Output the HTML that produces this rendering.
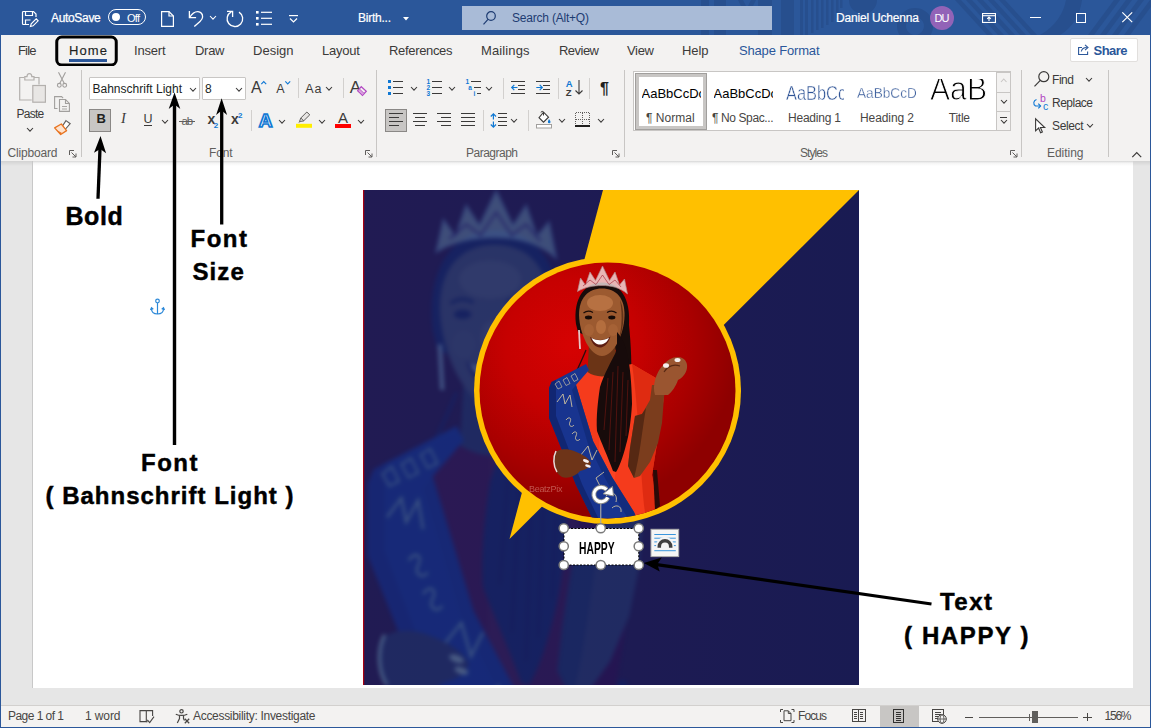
<!DOCTYPE html>
<html lang="en">
<head>
<meta charset="utf-8">
<title>Word</title>
<style>
html,body{margin:0;padding:0}
body{width:1151px;height:728px;overflow:hidden;position:relative;background:#e6e6e6;font-family:"Liberation Sans",sans-serif;color:#323130}
.a,.t,svg{position:absolute}
svg{overflow:visible}
.t{white-space:pre;line-height:1;font-size:13px}
#titlebar{position:absolute;left:0;top:0;width:1151px;height:35px;background:#2b579a;overflow:hidden}
#tabs{position:absolute;left:1px;top:35px;width:1149px;height:31px;background:#f3f2f1}
#ribbon{position:absolute;left:1px;top:66px;width:1149px;height:95px;background:#f3f2f1}
#shadow{position:absolute;left:1px;top:161px;width:1149px;height:5px;background:linear-gradient(#d2d2d2,#e6e6e6)}
#page{position:absolute;left:32px;top:161px;width:1101px;height:527px;background:linear-gradient(#d6d6d6,#f4f4f4 2px,#fff 5px);border-left:1px solid #c8c8c8;box-sizing:border-box}
#status{position:absolute;left:1px;top:705px;width:1149px;height:23px;background:#f3f2f1;border-top:1px solid #d2d0ce;box-sizing:border-box}
#lb{position:absolute;left:0;top:35px;width:1px;height:693px;background:#2b579a}
#rb{position:absolute;left:1150px;top:35px;width:1px;height:693px;background:#2b579a}
#bb{position:absolute;left:0;top:727px;width:1151px;height:1px;background:#2b579a}
.sep{position:absolute;width:1px;background:#c8c6c4}
.chev{position:absolute;width:6px;height:4px}
</style>
</head>
<body>
<div id="titlebar"><svg style="left:0;top:0" width="1151" height="35" viewBox="0 0 1151 35" fill="#274f8e"><rect x="701" y="0" width="8" height="35"/><rect x="714" y="0" width="12" height="35"/><path d="M738 0h5l4 8 4-8h5l-7 14h-4z"/><rect x="758" y="0" width="14" height="35"/><rect x="781" y="0" width="13" height="35"/><rect x="800" y="0" width="3" height="35"/><rect x="805" y="0" width="3" height="35"/><rect x="811" y="0" width="2.500" height="33"/><rect x="816" y="0" width="2.500" height="30"/><rect x="821" y="0" width="2.500" height="28"/><rect x="826" y="0" width="2.500" height="25"/><rect x="831" y="0" width="2.500" height="22"/><rect x="836" y="0" width="2.500" height="18"/><rect x="840" y="0" width="2.500" height="8"/><path d="M849 0a14 14 0 0 0 28 0z"/><path d="M915 8a18 18 0 1 0 .01 0zM915 17a9 9 0 1 1-.01 0z" fill-rule="evenodd"/><path d="M955 0h6l32 35h-6z"/><path d="M966 0h6l32 35h-6z"/><path d="M977 0h6l32 35h-6z"/><path d="M988 0h6l32 35h-6z"/><path d="M999 0h6l32 35h-6z"/><path d="M1040 35C1056 26 1064 12 1066 0h16c-2 16-10 28-22 35z"/><path d="M1088 35h6l26-35h-6z"/><path d="M1100 35h6l26-35h-6z"/><path d="M1112 35h6l26-35h-6z"/><path d="M1124 35h6l26-35h-6z"/></svg><svg style="left:22px;top:10.5px" width="16" height="16" viewBox="0 0 16 16" fill="none" stroke="#fff" stroke-width="1.2"><path d="M7 13.5H1.5a1 1 0 0 1-1-1V1.5a1 1 0 0 1 1-1h10l2.5 2.5V6"/><path d="M3.5 .5v4h7v-4"/><path d="M3.5 13.5V9h5"/><path d="M8.5 15.5l.7-2.6 5-5 1.9 1.9-5 5z"/></svg><span class="t" style='left:51.00px;top:12.00px;font-size:12px;color:#ffffff;letter-spacing:-0.328px;-webkit-text-stroke:.25px #fff;'>AutoSave</span><div class="a" style="left:108px;top:9px;width:36px;height:14px;border:1px solid #fff;border-radius:8px"></div><div class="a" style="left:112px;top:13px;width:8px;height:8px;border-radius:4px;background:#fff"></div><span class="t" style='left:127.00px;top:13.00px;font-size:11px;color:#ffffff;letter-spacing:-0.742px;'>Off</span><svg style="left:160.5px;top:10.5px" width="13" height="16" viewBox="0 0 13 16" fill="none" stroke="#fff" stroke-width="1.2"><path d="M.6 .6h7.4l4.4 4.4v10.4H.6z"/><path d="M8 .6v4.4h4.4"/></svg><svg style="left:0;top:0" width="300" height="35" viewBox="0 0 300 35" fill="none" stroke="#fff" stroke-width="1.300"><path d="M189.400 11v6.700h6.700"/><path d="M189.600 17.500C192 13.500 195 11.500 197.900 11.600c3 .100 4.800 2.500 4.700 5.300-.100 2-1.300 3.300-2.600 4.500L194.300 26.600"/><path d="M227 11.400h5.600v5.500"/><path d="M239 12.100A7.800 7.800 0 1 1 231.300 11.800"/></svg><svg style="left:209.5px;top:16px" width="6" height="3.2" viewBox="0 0 6 3.2"><path d="M0 0 L3.0 3.2 L6 0" fill="none" stroke="#fff" stroke-width="1.05"/></svg><svg style="left:255.5px;top:11px" width="16" height="15" viewBox="0 0 16 15" fill="#fff"><rect x="0" y="0" width="2.6" height="2.6"/><rect x="0" y="6" width="2.6" height="2.6"/><rect x="0" y="12" width="2.6" height="2.600"/><rect x="5" y=".7" width="11" height="1.2"/><rect x="5" y="6.7" width="11" height="1.2"/><rect x="5" y="12.7" width="11" height="1.200"/></svg><svg style="left:289px;top:14.5px" width="9" height="8" viewBox="0 0 9 8" fill="none" stroke="#fff" stroke-width="1.2"><path d="M0 .6h9"/><path d="M1 3.500l3.500 3.500 3.500-3.500"/></svg><span class="t" style='left:358.00px;top:12.00px;font-size:12px;color:#ffffff;letter-spacing:-0.241px;-webkit-text-stroke:.2px #fff;'>Birth...</span><svg style="left:402.500px;top:16.5px" width="6" height="4" viewBox="0 0 6 4"><path d="M0 0h6l-3 3.500z" fill="#fff"/></svg><div class="a" style="left:462px;top:6px;width:310px;height:23.5px;background:#a9bbd7"></div><svg style="left:482.500px;top:11px" width="13" height="14" viewBox="0 0 13 14" fill="none" stroke="#1e3c72" stroke-width="1.2"><circle cx="8" cy="5" r="4.300"/><path d="M5 8.300L.5 13.300"/></svg><span class="t" style='left:512.00px;top:12.00px;font-size:12px;color:#1e3c72;letter-spacing:-0.208px;'>Search (Alt+Q)</span><span class="t" style='left:836.00px;top:12.00px;font-size:12px;color:#ffffff;letter-spacing:-0.184px;-webkit-text-stroke:.2px #fff;'>Daniel Uchenna</span><div class="a" style="left:930px;top:6.2px;width:23.6px;height:23.6px;border-radius:12px;background:#9263b7"></div><span class="t" style='left:934.50px;top:13.00px;font-size:11px;color:#ffffff;letter-spacing:-0.891px;'>DU</span><svg style="left:981.5px;top:13px" width="14" height="10" viewBox="0 0 14 10" fill="none" stroke="#fff" stroke-width="1.1"><rect x=".55" y=".55" width="12.9" height="8.9"/><path d="M.5 2.700h13"/><path d="M7 8V4.300M5.200 5.800L7 4l1.800 1.800"/></svg><div class="a" style="left:1030px;top:16.5px;width:10.500px;height:1.200px;background:#fff"></div><div class="a" style="left:1076px;top:12.5px;width:8px;height:8px;border:1.200px solid #fff"></div><svg style="left:1121.700px;top:12px" width="10.500" height="10.500" viewBox="0 0 10.500 10.500" stroke="#fff" stroke-width="1.200"><path d="M.3 .3l9.900 9.900M10.200 .3L.3 10.200"/></svg></div><div id="tabs"></div><span class="t" style='left:18.00px;top:44.00px;font-size:13px;color:#3b3a39;letter-spacing:-0.818px;'>File</span><svg style="left:0;top:30px" width="130" height="40" viewBox="0 30 130 40"><rect x="56.750" y="37" width="59.500" height="28" rx="5" fill="none" stroke="#000" stroke-width="3"/></svg><span class="t" style='left:69.00px;top:44.00px;font-size:13px;color:#201f1e;letter-spacing:1.104px;-webkit-text-stroke:0.15px #201f1e;'>Home</span><div class="a" style="left:69px;top:59px;width:38px;height:3px;background:#2b579a"></div><span class="t" style='left:134.00px;top:44.00px;font-size:13px;color:#3b3a39;letter-spacing:-0.203px;'>Insert</span><span class="t" style='left:195.00px;top:44.00px;font-size:13px;color:#3b3a39;letter-spacing:-0.281px;'>Draw</span><span class="t" style='left:253.00px;top:44.00px;font-size:13px;color:#3b3a39;letter-spacing:0.006px;'>Design</span><span class="t" style='left:322.00px;top:44.00px;font-size:13px;color:#3b3a39;letter-spacing:-0.209px;'>Layout</span><span class="t" style='left:389.00px;top:44.00px;font-size:13px;color:#3b3a39;letter-spacing:-0.332px;'>References</span><span class="t" style='left:481.00px;top:44.00px;font-size:13px;color:#3b3a39;letter-spacing:0.116px;'>Mailings</span><span class="t" style='left:559.00px;top:44.00px;font-size:13px;color:#3b3a39;letter-spacing:-0.525px;'>Review</span><span class="t" style='left:627.00px;top:44.00px;font-size:13px;color:#3b3a39;letter-spacing:-0.318px;'>View</span><span class="t" style='left:682.00px;top:44.00px;font-size:13px;color:#3b3a39;letter-spacing:-0.083px;'>Help</span><span class="t" style='left:739.00px;top:44.00px;font-size:13px;color:#2b579a;letter-spacing:-0.170px;'>Shape Format</span><div class="a" style="left:1070px;top:38px;width:66px;height:22px;border:1px solid #e1dfdd;background:#fff;border-radius:2px"></div><svg style="left:1077.500px;top:44px" width="12" height="11" viewBox="0 0 12 11" fill="none" stroke="#2b579a" stroke-width="1.1"><path d="M4 3.500H.6v7h9V7.500"/><path d="M3.300 7.500c.5-2.500 2.500-4 5.500-4"/><path d="M7 .8l3 2.700-3 2.700"/></svg><span class="t" style='left:1093.50px;top:44.00px;font-size:13px;color:#2b579a;font-weight:700;letter-spacing:-0.535px;'>Share</span><div id="ribbon"></div><div class="sep" style="left:80.5px;top:69.5px;height:87.0px;background:#c8c6c4"></div><div class="sep" style="left:376px;top:69.5px;height:87.0px;background:#c8c6c4"></div><div class="sep" style="left:623.5px;top:69.5px;height:87.0px;background:#c8c6c4"></div><div class="sep" style="left:1021px;top:69.5px;height:87.0px;background:#c8c6c4"></div><div class="sep" style="left:1108px;top:69.5px;height:87.0px;background:#c8c6c4"></div><svg style="left:0;top:66px" width="80" height="45" viewBox="0 66 80 45" fill="none" stroke="#b3b0ad" stroke-width="1.200"><path d="M24.500 77.500H19.700v22.500h12"/><path d="M34 77.500h5v7"/><path d="M24.800 80v-3.300h2.200c0-1.700 1-3 2.400-3s2.400 1.300 2.400 3h2.200V80z" fill="#f3f2f1"/><rect x="32.800" y="85.500" width="12.600" height="16.700" fill="#e8e6e4"/></svg><span class="t" style='left:16.50px;top:108.00px;font-size:12px;color:#3b3a39;letter-spacing:-0.747px;'>Paste</span><svg style="left:26.8px;top:127.5px" width="6" height="3.2" viewBox="0 0 6 3.2"><path d="M0 0 L3.0 3.2 L6 0" fill="none" stroke="#3b3a39" stroke-width="1.05"/></svg><svg style="left:57px;top:72px" width="10" height="16" viewBox="0 0 10 16" fill="none" stroke="#a19f9d" stroke-width="1.100"><path d="M1.500 .3L7.300 11.500M8.500 .3L2.700 11.500"/><circle cx="2.300" cy="13.300" r="1.900"/><circle cx="7.700" cy="13.300" r="1.900"/></svg><svg style="left:54px;top:95.500px" width="16" height="16" viewBox="0 0 16 16" fill="none" stroke="#a19f9d" stroke-width="1.100"><path d="M3.500 12.500H.6V.6h7l1.500 1.500"/><path d="M5.500 3.500h6l3.900 3.900v8H5.500z" fill="#f3f2f1"/><path d="M11.500 3.500v4h4"/><path d="M8 10.500h5M8 13h5" stroke-width=".9"/></svg><svg style="left:0;top:110px" width="80" height="30" viewBox="0 110 80 30"><path d="M66 120.600L70.200 123.700 65.300 129.300 62 126.700z" fill="#fff" stroke="#605e5c" stroke-width="1.100"/><path d="M54.600 127.900L61.300 124 66.600 130.600 60.700 134.500z" fill="#fde3cf" stroke="#e8731f" stroke-width="1.300" stroke-linejoin="round"/><path d="M57.500 130.500l4.500 2.600-1.600 1.200z" fill="#e8731f"/></svg><span class="t" style='left:7.50px;top:147.00px;font-size:12px;color:#605e5c;letter-spacing:-0.172px;'>Clipboard</span><svg style="left:69px;top:149.5px" width="8" height="8" viewBox="0 0 8 8" fill="none" stroke="#605e5c" stroke-width="1"><path d="M.5 5V.5H5"/><path d="M2.500 2.500L7 7M7 3.500V7H3.500"/></svg><div class="a" style="left:89px;top:77px;width:109px;height:21px;border:1px solid #c8c6c4;background:#fff;border-radius:1px"></div><span class="t" style='left:92.50px;top:83.00px;font-size:12px;color:#201f1e;letter-spacing:0.007px;'>Bahnschrift Light</span><svg style="left:190.3px;top:87.5px" width="6" height="3.2" viewBox="0 0 6 3.2"><path d="M0 0 L3.0 3.2 L6 0" fill="none" stroke="#3b3a39" stroke-width="1.05"/></svg><div class="a" style="left:202px;top:77px;width:41.500px;height:21px;border:1px solid #c8c6c4;background:#fff;border-radius:1px"></div><span class="t" style='left:205.00px;top:83.00px;font-size:12px;color:#201f1e;'>8</span><svg style="left:235.5px;top:87.5px" width="6" height="3.2" viewBox="0 0 6 3.2"><path d="M0 0 L3.0 3.2 L6 0" fill="none" stroke="#3b3a39" stroke-width="1.05"/></svg><span class="t" style='left:251.00px;top:80.00px;font-size:16px;color:#3b3a39;'>A</span><svg style="left:261px;top:81.300px" width="5.500" height="3.500" viewBox="0 0 5.500 3.500"><path d="M.3 3.200L2.750 .6 5.200 3.200" fill="none" stroke="#0f78d4" stroke-width="1.100"/></svg><span class="t" style='left:276.30px;top:83.00px;font-size:12.5px;color:#3b3a39;'>A</span><svg style="left:284.700px;top:81px" width="5.500" height="3.500" viewBox="0 0 5.500 3.500"><path d="M.3 .3L2.750 2.900 5.200 .3" fill="none" stroke="#0f78d4" stroke-width="1.100"/></svg><div class="sep" style="left:297.5px;top:78px;height:20px;background:#d2d0ce"></div><span class="t" style='left:305.30px;top:83.00px;font-size:12.5px;color:#3b3a39;letter-spacing:0.903px;'>Aa</span><svg style="left:325.7px;top:87.3px" width="6" height="3.2" viewBox="0 0 6 3.2"><path d="M0 0 L3.0 3.2 L6 0" fill="none" stroke="#3b3a39" stroke-width="1.05"/></svg><div class="sep" style="left:342.5px;top:78px;height:20px;background:#d2d0ce"></div><span class="t" style='left:349.70px;top:79.00px;font-size:17px;color:#3b3a39;'>A</span><svg style="left:357px;top:86px" width="10" height="10" viewBox="0 0 10 10"><path d="M4.300 .700L9.300 5.200 5.500 9.300 .7 4.800z" fill="#f3f2f1" stroke="#b146c2" stroke-width="1.200"/><path d="M2.500 3L7.300 7.500 5.500 9.300 .7 4.800z" fill="#d9a0e0" stroke="#b146c2" stroke-width=".800"/></svg><div class="a" style="left:89px;top:109px;width:20px;height:21px;border:1px solid #8a8886;background:#c8c6c4"></div><span class="t" style='left:96.50px;top:112.00px;font-size:13px;color:#201f1e;font-weight:700;'>B</span><span class="t" style='left:121.00px;top:111.00px;font-size:14.5px;color:#3b3a39;font-style:italic;font-family:"Liberation Serif",serif;'>I</span><span class="t" style='left:143.50px;top:113.00px;font-size:12.5px;color:#3b3a39;'>U</span><div class="a" style="left:143.500px;top:125px;width:8px;height:1px;background:#3b3a39"></div><svg style="left:162.3px;top:119.5px" width="6" height="3.2" viewBox="0 0 6 3.2"><path d="M0 0 L3.0 3.2 L6 0" fill="none" stroke="#3b3a39" stroke-width="1.05"/></svg><span class="t" style='left:181.50px;top:116.00px;font-size:11.5px;color:#605e5c;letter-spacing:-1.097px;'>ab</span><div class="a" style="left:179.300px;top:120.500px;width:15.500px;height:1px;background:#605e5c"></div><span class="t" style='left:207.50px;top:112.00px;font-size:14px;color:#3b3a39;font-weight:700;'>x</span><span class="t" style='left:213.70px;top:122.00px;font-size:8px;color:#0f78d4;font-weight:700;'>2</span><span class="t" style='left:231.00px;top:112.00px;font-size:14px;color:#3b3a39;font-weight:700;'>x</span><span class="t" style='left:238.00px;top:112.00px;font-size:8px;color:#0f78d4;font-weight:700;'>2</span><div class="sep" style="left:250.5px;top:110px;height:21px;background:#d2d0ce"></div><span class="t" style='left:258.70px;top:111.00px;font-size:19px;color:#fff;font-weight:700;-webkit-text-stroke:1.700px #0f78d4;'>A</span><svg style="left:278.5px;top:119.5px" width="6" height="3.2" viewBox="0 0 6 3.2"><path d="M0 0 L3.0 3.2 L6 0" fill="none" stroke="#3b3a39" stroke-width="1.05"/></svg><svg style="left:296px;top:111.200px" width="16" height="17" viewBox="0 0 16 17"><rect x="0" y="12.800" width="16" height="4" fill="#ffee00"/><path d="M3.500 10.500l1.300-3.500 6-6 3 2.800-6.300 6.200z" fill="#e6e4e2" stroke="#605e5c" stroke-width="1"/><path d="M4.800 7l3 3" stroke="#605e5c" stroke-width="1"/><path d="M2 11.500l1.500-1 .8.800z" fill="#605e5c"/></svg><svg style="left:319px;top:119.5px" width="6" height="3.2" viewBox="0 0 6 3.2"><path d="M0 0 L3.0 3.2 L6 0" fill="none" stroke="#3b3a39" stroke-width="1.05"/></svg><span class="t" style='left:338.00px;top:110.00px;font-size:15px;color:#3b3a39;'>A</span><div class="a" style="left:335px;top:124px;width:16px;height:4px;background:#ff0000"></div><svg style="left:357.5px;top:119.5px" width="6" height="3.2" viewBox="0 0 6 3.2"><path d="M0 0 L3.0 3.2 L6 0" fill="none" stroke="#3b3a39" stroke-width="1.05"/></svg><span class="t" style='left:209.00px;top:147.00px;font-size:12px;color:#605e5c;letter-spacing:-0.172px;'>Font</span><svg style="left:365px;top:149.5px" width="8" height="8" viewBox="0 0 8 8" fill="none" stroke="#605e5c" stroke-width="1"><path d="M.5 5V.5H5"/><path d="M2.500 2.500L7 7M7 3.500V7H3.500"/></svg><svg style="left:410.5px;top:87px" width="6" height="3.2" viewBox="0 0 6 3.2"><path d="M0 0 L3.0 3.2 L6 0" fill="none" stroke="#3b3a39" stroke-width="1.05"/></svg><span class="t" style='left:426.50px;top:79.00px;font-size:6.5px;color:#0f78d4;font-weight:700;'>1</span><span class="t" style='left:426.50px;top:85.00px;font-size:6.5px;color:#0f78d4;font-weight:700;'>2</span><span class="t" style='left:426.50px;top:91.00px;font-size:6.5px;color:#0f78d4;font-weight:700;'>3</span><svg style="left:449.3px;top:87px" width="6" height="3.2" viewBox="0 0 6 3.2"><path d="M0 0 L3.0 3.2 L6 0" fill="none" stroke="#3b3a39" stroke-width="1.05"/></svg><span class="t" style='left:465.50px;top:79.00px;font-size:6.5px;color:#0f78d4;font-weight:700;'>1</span><span class="t" style='left:468.30px;top:85.00px;font-size:6.5px;color:#0f78d4;font-weight:700;'>a</span><span class="t" style='left:473.50px;top:91.00px;font-size:6.5px;color:#0f78d4;font-weight:700;'>i</span><svg style="left:486.3px;top:87px" width="6" height="3.2" viewBox="0 0 6 3.2"><path d="M0 0 L3.0 3.2 L6 0" fill="none" stroke="#3b3a39" stroke-width="1.05"/></svg><div class="sep" style="left:503px;top:78px;height:21px;background:#d2d0ce"></div><svg style="left:511px;top:83px" width="7" height="9" viewBox="0 0 7 9"><path d="M6.500 4.500H1M3.300 1.800L.7 4.500l2.600 2.700" fill="none" stroke="#0f78d4" stroke-width="1.200"/></svg><svg style="left:535.500px;top:83px" width="7" height="9" viewBox="0 0 7 9"><path d="M.3 4.500H6M3.700 1.800L6.300 4.500 3.700 7.200" fill="none" stroke="#0f78d4" stroke-width="1.200"/></svg><div class="sep" style="left:558px;top:78px;height:21px;background:#d2d0ce"></div><span class="t" style='left:565.80px;top:79.00px;font-size:9.5px;color:#0f78d4;font-weight:700;'>A</span><span class="t" style='left:565.80px;top:88.00px;font-size:9.5px;color:#3b3a39;font-weight:700;'>Z</span><svg style="left:574.500px;top:80px" width="8" height="15" viewBox="0 0 8 15" fill="none" stroke="#3b3a39" stroke-width="1.100"><path d="M4 0v14M.5 10.500L4 14l3.500-3.500"/></svg><div class="sep" style="left:589px;top:78px;height:21px;background:#d2d0ce"></div><span class="t" style='left:600.00px;top:81.00px;font-size:16px;color:#201f1e;font-weight:700;'>¶</span><div class="a" style="left:385px;top:109px;width:20px;height:21px;border:1px solid #8a8886;background:#c8c6c4"></div><div class="sep" style="left:483px;top:110px;height:21px;background:#d2d0ce"></div><svg style="left:490px;top:112.500px" width="7" height="15" viewBox="0 0 7 15"><path d="M3.400 .8v5.700M3.400 8.500v5.700M.8 3.500L3.400 .8 6 3.500M.8 11.500L3.400 14.200 6 11.500" fill="none" stroke="#0f78d4" stroke-width="1.200"/></svg><svg style="left:511.3px;top:119px" width="6" height="3.2" viewBox="0 0 6 3.2"><path d="M0 0 L3.0 3.2 L6 0" fill="none" stroke="#3b3a39" stroke-width="1.05"/></svg><div class="sep" style="left:528px;top:110px;height:21px;background:#d2d0ce"></div><svg style="left:536px;top:111px" width="16" height="18" viewBox="0 0 16 18"><rect x=".5" y="13.500" width="15" height="3.500" fill="#fff" stroke="#a19f9d" stroke-width="1"/><path d="M7.500 1.200l5 5-5 5-4.500-4.500z" fill="#fff" stroke="#3b3a39" stroke-width="1.100"/><path d="M5 1.500c0-1.500 2.500-1.500 2.500 0v3" fill="none" stroke="#3b3a39" stroke-width="1"/><path d="M13 8c1 1.500 1.500 2.300 1.500 3a1.300 1.300 0 0 1-2.600 0c0-.7.400-1.500 1.100-3z" fill="#0f78d4"/></svg><svg style="left:558.5px;top:119px" width="6" height="3.2" viewBox="0 0 6 3.2"><path d="M0 0 L3.0 3.2 L6 0" fill="none" stroke="#3b3a39" stroke-width="1.05"/></svg><svg style="left:575px;top:112px" width="15" height="15" viewBox="0 0 15 15" fill="none" shape-rendering="crispEdges"><path d="M.5 .5h14v13.500" stroke="#605e5c" stroke-width="1" stroke-dasharray="1 1"/><path d="M.5 .5v13.500" stroke="#605e5c" stroke-width="1" stroke-dasharray="1 1"/><path d="M7.500 1v13M1 7.500h13" stroke="#605e5c" stroke-width="1" stroke-dasharray="1 1"/><path d="M0 14h15" stroke="#201f1e" stroke-width="2"/></svg><svg style="left:598px;top:119px" width="6" height="3.2" viewBox="0 0 6 3.2"><path d="M0 0 L3.0 3.2 L6 0" fill="none" stroke="#3b3a39" stroke-width="1.05"/></svg><span class="t" style='left:466.00px;top:147.00px;font-size:12px;color:#605e5c;letter-spacing:-0.506px;'>Paragraph</span><svg style="left:612px;top:149.5px" width="8" height="8" viewBox="0 0 8 8" fill="none" stroke="#605e5c" stroke-width="1"><path d="M.5 5V.5H5"/><path d="M2.500 2.500L7 7M7 3.500V7H3.500"/></svg><div class="a" style="left:633px;top:71px;width:375.500px;height:58px;border:1px solid #c8c6c4;background:#fff;overflow:hidden;box-sizing:content-box"></div><div class="a" style="left:635.500px;top:73.500px;width:64px;height:49.500px;border:3px solid #c8c6c4;outline:1px solid #a19f9d;background:#fff"></div><div class="a" style="left:641.500px;top:80px;width:59px;height:24px;overflow:hidden"><span class="t" style='left:0.00px;top:7.00px;font-size:13px;color:#000;'>AaBbCcDc</span></div><span class="t" style='left:646.00px;top:112.00px;font-size:12px;color:#484644;letter-spacing:0.042px;'>¶ Normal</span><div class="a" style="left:713.500px;top:80px;width:59px;height:24px;overflow:hidden"><span class="t" style='left:0.00px;top:7.00px;font-size:13px;color:#000;'>AaBbCcDc</span></div><span class="t" style='left:712.00px;top:112.00px;font-size:12px;color:#484644;letter-spacing:-0.392px;'>¶ No Spac...</span><div class="a" style="left:785.500px;top:78px;width:58px;height:28px;overflow:hidden"><span class="t" style='left:0.00px;top:5.00px;font-size:20px;color:#2f5496;-webkit-text-stroke:.5px #fff;transform:scaleX(.82);transform-origin:0 0;'>AaBbCcD</span></div><span class="t" style='left:788.00px;top:112.00px;font-size:12px;color:#484644;letter-spacing:-0.215px;'>Heading 1</span><div class="a" style="left:857px;top:78px;width:59px;height:28px;overflow:hidden"><span class="t" style='left:0.00px;top:7.00px;font-size:15.5px;color:#2f5496;-webkit-text-stroke:.4px #fff;transform:scaleX(.88);transform-origin:0 0;'>AaBbCcDd</span></div><span class="t" style='left:860.00px;top:112.00px;font-size:12px;color:#484644;letter-spacing:-0.090px;'>Heading 2</span><div class="a" style="left:928px;top:79px;width:60px;height:28px;overflow:hidden"><span class="t" style='left:1.50px;top:-7.00px;font-size:33.5px;color:#000;-webkit-text-stroke:1px #fff;transform:scaleX(.9);transform-origin:0 0;'>AaB</span></div><span class="t" style='left:948.75px;top:112.00px;font-size:12px;color:#484644;letter-spacing:-0.246px;'>Title</span><div class="a" style="left:996px;top:71.500px;width:12.500px;height:19px;border:1px solid #c8c6c4;background:#f3f2f1"></div><div class="a" style="left:996px;top:91.500px;width:12.500px;height:18.500px;border:1px solid #c8c6c4;background:#f3f2f1"></div><div class="a" style="left:996px;top:111px;width:12.500px;height:18px;border:1px solid #c8c6c4;background:#f3f2f1"></div><svg style="left:1000.800px;top:79px" width="5.500" height="3" viewBox="0 0 5.500 3"><path d="M0 3L2.750 0 5.500 3" fill="none" stroke="#c8c6c4" stroke-width="1.100"/></svg><svg style="left:1000.8px;top:99.5px" width="6" height="3.2" viewBox="0 0 6 3.2"><path d="M0 0 L3.0 3.2 L6 0" fill="none" stroke="#3b3a39" stroke-width="1.05"/></svg><div class="a" style="left:1000.300px;top:116.500px;width:6.500px;height:1.100px;background:#3b3a39"></div><svg style="left:1000.8px;top:119.5px" width="6" height="3.2" viewBox="0 0 6 3.2"><path d="M0 0 L3.0 3.2 L6 0" fill="none" stroke="#3b3a39" stroke-width="1.05"/></svg><span class="t" style='left:800.00px;top:147.00px;font-size:12px;color:#605e5c;letter-spacing:-0.938px;'>Styles</span><svg style="left:1010px;top:149.5px" width="8" height="8" viewBox="0 0 8 8" fill="none" stroke="#605e5c" stroke-width="1"><path d="M.5 5V.5H5"/><path d="M2.500 2.500L7 7M7 3.500V7H3.500"/></svg><svg style="left:1033.500px;top:71px" width="16" height="16" viewBox="0 0 16 16" fill="none" stroke="#3b3a39" stroke-width="1.200"><circle cx="9.800" cy="5.700" r="5"/><path d="M6.300 9.300L.5 15.300"/></svg><span class="t" style='left:1052.00px;top:74.00px;font-size:12px;color:#3b3a39;letter-spacing:-0.448px;'>Find</span><svg style="left:1085.5px;top:77.5px" width="6" height="3.2" viewBox="0 0 6 3.2"><path d="M0 0 L3.0 3.2 L6 0" fill="none" stroke="#3b3a39" stroke-width="1.05"/></svg><span class="t" style='left:1040.00px;top:93.00px;font-size:10.5px;color:#b146c2;'>b</span><span class="t" style='left:1043.00px;top:101.00px;font-size:10.5px;color:#0f78d4;'>c</span><svg style="left:1033px;top:98.500px" width="10" height="11" viewBox="0 0 10 11" fill="none" stroke="#0f78d4" stroke-width="1.100"><path d="M3.500 .5C.5 1.500-.3 5 2.500 7h5"/><path d="M5.300 4.700L7.600 7l-2.300 2.300"/></svg><span class="t" style='left:1052.00px;top:97.00px;font-size:12px;color:#3b3a39;letter-spacing:-0.505px;'>Replace</span><svg style="left:1035px;top:117.500px" width="11" height="16" viewBox="0 0 11 16"><path d="M.6 .8v12l3-2.800 2 4.800 1.800-.8-2-4.500h4.300z" fill="#fff" stroke="#3b3a39" stroke-width="1.100"/></svg><span class="t" style='left:1052.00px;top:120.00px;font-size:12px;color:#3b3a39;letter-spacing:-0.372px;'>Select</span><svg style="left:1086.75px;top:123.5px" width="6" height="3.2" viewBox="0 0 6 3.2"><path d="M0 0 L3.0 3.2 L6 0" fill="none" stroke="#3b3a39" stroke-width="1.05"/></svg><span class="t" style='left:1047.00px;top:147.00px;font-size:12px;color:#605e5c;letter-spacing:-0.034px;'>Editing</span><svg style="left:1131.750px;top:151.750px" width="9.500" height="5.500" viewBox="0 0 9.500 5.500"><path d="M.3 5.200L4.750 .6 9.200 5.200" fill="none" stroke="#3b3a39" stroke-width="1.200"/></svg><svg style="left:0;top:0" width="1151" height="728" viewBox="0 0 1151 728" shape-rendering="crispEdges"><rect x="388" y="80" width="3" height="3" fill="#0f78d4"/><rect x="393" y="81" width="10" height="1" fill="#3b3a39"/><rect x="388" y="86" width="3" height="3" fill="#0f78d4"/><rect x="393" y="87" width="10" height="1" fill="#3b3a39"/><rect x="388" y="92" width="3" height="3" fill="#0f78d4"/><rect x="393" y="93" width="10" height="1" fill="#3b3a39"/><rect x="432" y="81" width="10" height="1" fill="#3b3a39"/><rect x="432" y="87" width="10" height="1" fill="#3b3a39"/><rect x="432" y="93" width="10" height="1" fill="#3b3a39"/><rect x="471" y="81" width="10" height="1" fill="#3b3a39"/><rect x="474" y="87" width="7" height="1" fill="#3b3a39"/><rect x="477" y="93" width="4" height="1" fill="#3b3a39"/><rect x="511" y="81" width="14" height="1" fill="#3b3a39"/><rect x="518" y="85" width="7" height="1" fill="#3b3a39"/><rect x="518" y="89" width="7" height="1" fill="#3b3a39"/><rect x="511" y="93" width="14" height="1" fill="#3b3a39"/><rect x="536" y="81" width="14" height="1" fill="#3b3a39"/><rect x="543" y="85" width="7" height="1" fill="#3b3a39"/><rect x="543" y="89" width="7" height="1" fill="#3b3a39"/><rect x="536" y="93" width="14" height="1" fill="#3b3a39"/><rect x="389" y="113" width="14" height="1" fill="#3b3a39"/><rect x="413" y="113" width="14" height="1" fill="#3b3a39"/><rect x="437" y="113" width="14" height="1" fill="#3b3a39"/><rect x="461" y="113" width="14" height="1" fill="#3b3a39"/><rect x="498" y="113" width="9" height="1" fill="#3b3a39"/><rect x="389" y="117" width="10" height="1" fill="#3b3a39"/><rect x="415" y="117" width="10" height="1" fill="#3b3a39"/><rect x="441" y="117" width="10" height="1" fill="#3b3a39"/><rect x="461" y="117" width="14" height="1" fill="#3b3a39"/><rect x="498" y="117" width="9" height="1" fill="#3b3a39"/><rect x="389" y="121" width="14" height="1" fill="#3b3a39"/><rect x="413" y="121" width="14" height="1" fill="#3b3a39"/><rect x="437" y="121" width="14" height="1" fill="#3b3a39"/><rect x="461" y="121" width="14" height="1" fill="#3b3a39"/><rect x="498" y="121" width="9" height="1" fill="#3b3a39"/><rect x="389" y="125" width="10" height="1" fill="#3b3a39"/><rect x="415" y="125" width="10" height="1" fill="#3b3a39"/><rect x="441" y="125" width="10" height="1" fill="#3b3a39"/><rect x="461" y="125" width="14" height="1" fill="#3b3a39"/><rect x="498" y="125" width="9" height="1" fill="#3b3a39"/></svg><div id="shadow"></div><div id="page"></div><svg style="left:0;top:0" width="1151" height="728" viewBox="0 0 1151 728">
<defs>
<linearGradient id="bgg" x1="0" x2="1" y1="0" y2="0"><stop offset="0" stop-color="#211b53"/><stop offset=".55" stop-color="#1d1b53"/><stop offset="1" stop-color="#191b52"/></linearGradient>
<radialGradient id="redg" cx="572" cy="345" r="165" gradientUnits="userSpaceOnUse"><stop offset="0" stop-color="#d60202"/><stop offset=".4" stop-color="#c60101"/><stop offset=".75" stop-color="#a80000"/><stop offset="1" stop-color="#8e0000"/></radialGradient>
<clipPath id="cpost"><rect x="363" y="190" width="496" height="495"/></clipPath>
<clipPath id="ccirc"><circle cx="607.500" cy="390.500" r="128"/></clipPath>
<filter id="soft" x="-5%" y="-5%" width="110%" height="110%" color-interpolation-filters="sRGB"><feGaussianBlur stdDeviation=".7"/></filter>
<filter id="ghostf" x="-5%" y="-5%" width="110%" height="110%" color-interpolation-filters="sRGB"><feColorMatrix type="matrix" values="0.265 0.806 -0.177 0 -0.140 -0.500 1.830 -0.347 0 0.182 -0.399 0.763 0.389 0 0.509 0 0 0 1 0"/><feGaussianBlur stdDeviation=".8"/></filter>
</defs>
<rect x="363" y="190" width="496" height="495" fill="url(#bgg)"/>
<rect x="363" y="190" width="1.200" height="495" fill="#a80010"/>
<g clip-path="url(#cpost)"><g transform="translate(495 222) scale(2.400) translate(-602 -279)" filter="url(#ghostf)" opacity=".28"><g>
<path d="M576 324C573 298 585 282.500 602 282.500C620 282.500 631 298 629 325C631 345 632 365 631 388L597 388C606 375 612 362 616 350L578 332Z" fill="#180c0b"/>
<path d="M575 381L592 367L616 367L632 364L656 378L664 396L660 425L652 475L659 512L640 526L615 526L595 485L570 420L556 390Z" fill="#f53b1c"/>
<path d="M600 372L616 368C622 400 618 440 616 470L612 500L600 480C598 450 600 420 600 372Z" fill="#ff4a26" opacity=".6"/>
<path d="M632 364L656 378L664 396L660 425L652 475L659 512L646 520C640 480 640 420 632 364Z" fill="#d9280f" opacity=".8"/>
<path d="M653 470L657 470L660 506L655 510Z" fill="#2a0a08"/>
<path d="M589 344L615 344L617.500 371C609 378 596 378 587.500 372Z" fill="#6b3416"/>
<path d="M579 315C579 298 588 288.500 602 288.500C616 288.500 625 298 624.500 316C624 334 614 356 602 356C590 356 579.500 334 579 315Z" fill="#9c5a30"/>
<ellipse cx="600" cy="303" rx="13" ry="8" fill="#c07a48" opacity=".75"/>
<ellipse cx="601" cy="327" rx="5" ry="7" fill="#bf7645" opacity=".7"/>
<ellipse cx="589" cy="330" rx="5" ry="6" fill="#ad683a" opacity=".6"/>
<ellipse cx="613" cy="330" rx="5" ry="6" fill="#ad683a" opacity=".6"/>
<path d="M620 300C625 310 625 330 616 346C622 334 623 316 620 300Z" fill="#4a2210" opacity=".7"/>
<path d="M583.500 313q4.500-3.500 9.500-.5M607 312.500q5-3 9.500.5" stroke="#1c0d08" stroke-width="1.300" fill="none"/>
<ellipse cx="588.500" cy="317.500" rx="3.600" ry="1.900" fill="#160a07"/><ellipse cx="611.800" cy="317.500" rx="3.600" ry="1.900" fill="#160a07"/>
<path d="M590 337C596 341 605 341 610.500 336.500C608 345 603 347.500 600 347.500C596 347.500 592 344 590 337Z" fill="#5c1d12"/>
<path d="M591.500 338C597 341 604 341 609 337.800C607 343 603 344.600 600 344.600C597 344.600 593.500 342.500 591.500 338Z" fill="#fff"/>
<path d="M579 330L580 349" stroke="#e6c6c6" stroke-width="1.800"/>
<path d="M586 350C580 365 572 380 565 396" stroke="#2a0e0c" stroke-width="1.300" fill="none"/>
<path d="M577.500 291.500L580.500 278L585.500 285L590 272L595.500 280.500L602.500 266L609.500 280.500L615 272L619.500 285L624.500 279L627.500 294C620 287.500 611 285.500 602 285.500C593 285.500 584 287.500 577.500 291.500Z" fill="#f2e2e2" fill-opacity=".8" stroke="#b08a8a" stroke-width=".7"/>
<path d="M583 286L590 280L596 284.500L602.500 275L609 284.500L615 280L621 287" stroke="#a02030" stroke-width="1" fill="none" opacity=".6"/>
<path d="M549 388L551.500 382L586 364L589 370L576 385L593 441L612 477L634 512L640 526L596 526L576 485L549 418Z" fill="#18348f"/>
<path d="M549 388L551.500 382L556 380L556 416L582 484L602 526L596 526L576 485L549 418Z" fill="#10236a" opacity=".8"/>
<path d="M576 385L593 441L612 477L634 512L640 526L632 526L606 480L588 444L572 390Z" fill="#122a78" opacity=".8"/>
<path d="M555 384l4-3 3 6-4 2zM563 380l4-2.500 3 6-4 2zM571 376l4-2.500 3 6-4 2z" fill="none" stroke="#d8c9a0" stroke-width=".8" opacity=".8"/>
<path d="M557 402l6-8 2 10 5-9 2 12M566 420c3-4 6-2 4 2s2 6 4 3M572 434c3-4 6-2 4 2s2 6 4 3M580 456l8-10 4 14 5-10M596 478l8-6M596 478l4 8M606 496c6-6 12-2 10 6M612 508c4-4 10-2 9 4" fill="none" stroke="#d8c9a0" stroke-width="1" opacity=".85"/>
<path d="M617 332C626 342 631 360 632 404C631 420 629 435 626 445C623 457 619 468 616 472L613 471C608 457 601 442 597 431C596 417 598 400 600 387C604 374 611 362 617 350Z" fill="#170b0b"/>
<path d="M608 378L604 430M613 372L609 450M618 366L615 462M623 372L620 452M628 380L626 436" stroke="#8a1a12" stroke-width=".9" opacity=".55" fill="none"/>
<path d="M652 385L666 385L664 397L662 423L658 443L650 462L640 476L634 478L628 466L630 448L635 416L642 414L650 400Z" fill="#7b3d1d"/>
<path d="M635 416L642 414L646 408C642 430 640 456 634 478L628 466L630 448Z" fill="#4a2110" opacity=".75"/>
<path d="M655 395C652 385 656 372 664 364C668 360 672 357 678 357C684 357 688 362 687 368C686 374 682 378 678 380C676 386 672 392 668 395Z" fill="#9a5530"/>
<path d="M664 372C668 366 674 364 680 366" stroke="#5a2a14" stroke-width="1.200" fill="none"/>
<ellipse cx="666" cy="365.500" rx="3" ry="2.300" fill="#f6eeee"/><ellipse cx="677.500" cy="360" rx="3" ry="2" fill="#f6eeee"/>
<path d="M553.700 455C556 449 566 448 574 451C582 454 589 458 591 463C590 468 585 470 580 471C576 476 568 479 562 477C556 474 553 465 553.700 455Z" fill="#6e3418"/>
<path d="M556 451C553 457 553 466 557 472" stroke="#e8dada" stroke-width="1.500" fill="none"/>
<ellipse cx="586" cy="461" rx="3.200" ry="1.500" fill="#f6eeee" transform="rotate(20 586 461)"/><ellipse cx="588" cy="466" rx="3" ry="1.400" fill="#f6eeee" transform="rotate(20 588 466)"/>
</g></g></g>
<path d="M603 190H859L509.500 539z" fill="#ffc000"/>
<circle cx="607.500" cy="390.500" r="133.500" fill="#ffc000"/>
<circle cx="607.500" cy="390.500" r="128" fill="url(#redg)"/>
<g clip-path="url(#ccirc)"><g filter="url(#soft)"><g>
<path d="M576 324C573 298 585 282.500 602 282.500C620 282.500 631 298 629 325C631 345 632 365 631 388L597 388C606 375 612 362 616 350L578 332Z" fill="#180c0b"/>
<path d="M575 381L592 367L616 367L632 364L656 378L664 396L660 425L652 475L659 512L640 526L615 526L595 485L570 420L556 390Z" fill="#f53b1c"/>
<path d="M600 372L616 368C622 400 618 440 616 470L612 500L600 480C598 450 600 420 600 372Z" fill="#ff4a26" opacity=".6"/>
<path d="M632 364L656 378L664 396L660 425L652 475L659 512L646 520C640 480 640 420 632 364Z" fill="#d9280f" opacity=".8"/>
<path d="M653 470L657 470L660 506L655 510Z" fill="#2a0a08"/>
<path d="M589 344L615 344L617.500 371C609 378 596 378 587.500 372Z" fill="#6b3416"/>
<path d="M579 315C579 298 588 288.500 602 288.500C616 288.500 625 298 624.500 316C624 334 614 356 602 356C590 356 579.500 334 579 315Z" fill="#9c5a30"/>
<ellipse cx="600" cy="303" rx="13" ry="8" fill="#c07a48" opacity=".75"/>
<ellipse cx="601" cy="327" rx="5" ry="7" fill="#bf7645" opacity=".7"/>
<ellipse cx="589" cy="330" rx="5" ry="6" fill="#ad683a" opacity=".6"/>
<ellipse cx="613" cy="330" rx="5" ry="6" fill="#ad683a" opacity=".6"/>
<path d="M620 300C625 310 625 330 616 346C622 334 623 316 620 300Z" fill="#4a2210" opacity=".7"/>
<path d="M583.500 313q4.500-3.500 9.500-.5M607 312.500q5-3 9.500.5" stroke="#1c0d08" stroke-width="1.300" fill="none"/>
<ellipse cx="588.500" cy="317.500" rx="3.600" ry="1.900" fill="#160a07"/><ellipse cx="611.800" cy="317.500" rx="3.600" ry="1.900" fill="#160a07"/>
<path d="M590 337C596 341 605 341 610.500 336.500C608 345 603 347.500 600 347.500C596 347.500 592 344 590 337Z" fill="#5c1d12"/>
<path d="M591.500 338C597 341 604 341 609 337.800C607 343 603 344.600 600 344.600C597 344.600 593.500 342.500 591.500 338Z" fill="#fff"/>
<path d="M579 330L580 349" stroke="#e6c6c6" stroke-width="1.800"/>
<path d="M586 350C580 365 572 380 565 396" stroke="#2a0e0c" stroke-width="1.300" fill="none"/>
<path d="M577.500 291.500L580.500 278L585.500 285L590 272L595.500 280.500L602.500 266L609.500 280.500L615 272L619.500 285L624.500 279L627.500 294C620 287.500 611 285.500 602 285.500C593 285.500 584 287.500 577.500 291.500Z" fill="#f2e2e2" fill-opacity=".8" stroke="#b08a8a" stroke-width=".7"/>
<path d="M583 286L590 280L596 284.500L602.500 275L609 284.500L615 280L621 287" stroke="#a02030" stroke-width="1" fill="none" opacity=".6"/>
<path d="M549 388L551.500 382L586 364L589 370L576 385L593 441L612 477L634 512L640 526L596 526L576 485L549 418Z" fill="#18348f"/>
<path d="M549 388L551.500 382L556 380L556 416L582 484L602 526L596 526L576 485L549 418Z" fill="#10236a" opacity=".8"/>
<path d="M576 385L593 441L612 477L634 512L640 526L632 526L606 480L588 444L572 390Z" fill="#122a78" opacity=".8"/>
<path d="M555 384l4-3 3 6-4 2zM563 380l4-2.500 3 6-4 2zM571 376l4-2.500 3 6-4 2z" fill="none" stroke="#d8c9a0" stroke-width=".8" opacity=".8"/>
<path d="M557 402l6-8 2 10 5-9 2 12M566 420c3-4 6-2 4 2s2 6 4 3M572 434c3-4 6-2 4 2s2 6 4 3M580 456l8-10 4 14 5-10M596 478l8-6M596 478l4 8M606 496c6-6 12-2 10 6M612 508c4-4 10-2 9 4" fill="none" stroke="#d8c9a0" stroke-width="1" opacity=".85"/>
<path d="M617 332C626 342 631 360 632 404C631 420 629 435 626 445C623 457 619 468 616 472L613 471C608 457 601 442 597 431C596 417 598 400 600 387C604 374 611 362 617 350Z" fill="#170b0b"/>
<path d="M608 378L604 430M613 372L609 450M618 366L615 462M623 372L620 452M628 380L626 436" stroke="#8a1a12" stroke-width=".9" opacity=".55" fill="none"/>
<path d="M652 385L666 385L664 397L662 423L658 443L650 462L640 476L634 478L628 466L630 448L635 416L642 414L650 400Z" fill="#7b3d1d"/>
<path d="M635 416L642 414L646 408C642 430 640 456 634 478L628 466L630 448Z" fill="#4a2110" opacity=".75"/>
<path d="M655 395C652 385 656 372 664 364C668 360 672 357 678 357C684 357 688 362 687 368C686 374 682 378 678 380C676 386 672 392 668 395Z" fill="#9a5530"/>
<path d="M664 372C668 366 674 364 680 366" stroke="#5a2a14" stroke-width="1.200" fill="none"/>
<ellipse cx="666" cy="365.500" rx="3" ry="2.300" fill="#f6eeee"/><ellipse cx="677.500" cy="360" rx="3" ry="2" fill="#f6eeee"/>
<path d="M553.700 455C556 449 566 448 574 451C582 454 589 458 591 463C590 468 585 470 580 471C576 476 568 479 562 477C556 474 553 465 553.700 455Z" fill="#6e3418"/>
<path d="M556 451C553 457 553 466 557 472" stroke="#e8dada" stroke-width="1.500" fill="none"/>
<ellipse cx="586" cy="461" rx="3.200" ry="1.500" fill="#f6eeee" transform="rotate(20 586 461)"/><ellipse cx="588" cy="466" rx="3" ry="1.400" fill="#f6eeee" transform="rotate(20 588 466)"/>
</g></g></g>
</svg><svg style="left:0;top:0" width="1151" height="728" viewBox="0 0 1151 728"><rect x="564" y="528.500" width="74.750" height="36.500" fill="#fff"/><rect x="564" y="528.500" width="74.750" height="36.500" fill="none" stroke="#000" stroke-width="1" stroke-dasharray="2 1.500"/><path d="M600.750 502v24" stroke="#a6a6a6" stroke-width="1.200"/><path d="M606.600 489.600a7.300 7.300 0 1 0 1.200 7.800" fill="none" stroke="#8a8a8a" stroke-width="4.800"/><path d="M603 493.800l10.500 2.200-1-9.500z" fill="#fff" stroke="#8a8a8a" stroke-width="1"/><path d="M606.600 489.600a7.300 7.300 0 1 0 1.200 7.800" fill="none" stroke="#fff" stroke-width="3"/><circle cx="563.75" cy="528.25" r="4.600" fill="#fff" stroke="#7a7a7a" stroke-width="1.500"/><circle cx="600.75" cy="528.25" r="4.600" fill="#fff" stroke="#7a7a7a" stroke-width="1.500"/><circle cx="638.75" cy="528.25" r="4.600" fill="#fff" stroke="#7a7a7a" stroke-width="1.500"/><circle cx="563.75" cy="546.25" r="4.600" fill="#fff" stroke="#7a7a7a" stroke-width="1.500"/><circle cx="638.75" cy="546.25" r="4.600" fill="#fff" stroke="#7a7a7a" stroke-width="1.500"/><circle cx="563.75" cy="565" r="4.600" fill="#fff" stroke="#7a7a7a" stroke-width="1.500"/><circle cx="600.75" cy="565" r="4.600" fill="#fff" stroke="#7a7a7a" stroke-width="1.500"/><circle cx="638.75" cy="565" r="4.600" fill="#fff" stroke="#7a7a7a" stroke-width="1.500"/><rect x="651" y="529.300" width="27.700" height="27.300" fill="#f5f5f5" stroke="#ababab" stroke-width="1"/><rect x="654.300" y="534" width="21.500" height="1" fill="#3a96dd"/><rect x="654.300" y="537.7" width="21.500" height="1" fill="#3a96dd"/><rect x="654.300" y="541.4" width="21.500" height="1" fill="#3a96dd"/><rect x="654.300" y="545.1" width="21.500" height="1" fill="#3a96dd"/><rect x="654.300" y="550.2" width="21.500" height="1" fill="#3a96dd"/><path d="M656 548.300v-2.500a9 9 0 0 1 18 0v2.500z" fill="#f5f5f5"/><path d="M659.300 547.800v-1.300a5.700 5.700 0 0 1 11.400 0v1.300" fill="none" stroke="#404040" stroke-width="3.500"/><path d="M98 198.750L100.100 146" stroke="#000" stroke-width="3.300"/><path d="M100.500 135.900l5.600 17.300-5.900-4.300-6.200 3.800z" fill="#000"/><path d="M174.500 445V102" stroke="#000" stroke-width="3.400"/><path d="M174.500 92.400l5.800 16.700-5.800-4.600-5.800 4.600z" fill="#000"/><path d="M221.700 224.500V108" stroke="#000" stroke-width="3.300"/><path d="M221.600 98.300l5.500 16.700-5.500-4.600-5.500 4.600z" fill="#000"/><path d="M931.500 604L655 564.300" stroke="#000" stroke-width="3.200"/><path d="M643.750 563l18-5.500-4.500 6.800 2.500 7.200z" fill="#000"/><g fill="none" stroke="#2b88d8" stroke-width="1.200"><circle cx="157.500" cy="301" r="1.800"/><path d="M157.500 303v11M151.500 308.500c0 3.500 2.500 5.500 6 5.500s6-2 6-5.500M150.500 310l1-2.300 1.800 1.500M164.500 310l-1-2.300-1.800 1.500"/></g></svg><span class="t" style="left:529px;top:485px;font-size:9px;color:#f0b8a8;opacity:.45;letter-spacing:-.3px">BeatzPix</span><span class="t" style="left:579.300px;top:540px;font-size:16.500px;font-weight:700;color:#000;transform:scaleX(.625);transform-origin:0 0">HAPPY</span><span class="t" style='left:65.50px;top:204.00px;font-size:25px;color:#000;font-weight:700;letter-spacing:0.568px;-webkit-text-stroke:.45px #000;'>Bold</span><span class="t" style='left:190.50px;top:227.00px;font-size:24px;color:#000;font-weight:700;letter-spacing:1.505px;-webkit-text-stroke:.45px #000;'>Font</span><span class="t" style='left:192.50px;top:260.00px;font-size:24px;color:#000;font-weight:700;letter-spacing:1.090px;-webkit-text-stroke:.45px #000;'>Size</span><span class="t" style='left:141.00px;top:451.00px;font-size:24px;color:#000;font-weight:700;letter-spacing:1.505px;-webkit-text-stroke:.45px #000;'>Font</span><span class="t" style='left:45.50px;top:484.00px;font-size:24px;color:#000;font-weight:700;letter-spacing:1.001px;-webkit-text-stroke:.45px #000;'>( Bahnschrift Light )</span><span class="t" style='left:940.00px;top:590.00px;font-size:24px;color:#000;font-weight:700;letter-spacing:1.474px;-webkit-text-stroke:.45px #000;'>Text</span><span class="t" style='left:904.00px;top:624.00px;font-size:24px;color:#000;font-weight:700;letter-spacing:1.615px;-webkit-text-stroke:.45px #000;'>( HAPPY )</span><div id="status"></div><span class="t" style='left:8.00px;top:710.00px;font-size:12px;color:#484644;letter-spacing:-0.539px;'>Page 1 of 1</span><span class="t" style='left:85.00px;top:710.00px;font-size:12px;color:#484644;letter-spacing:-0.106px;'>1 word</span><svg style="left:139px;top:709.500px" width="16" height="14" viewBox="0 0 16 14" fill="none" stroke="#484644" stroke-width="1.100"><path d="M1 .6h6.300v11H1z"/><path d="M7.300 .6h6.300v5.500"/><path d="M7.300 11.600h1.200"/><path d="M8.300 9.800l2.400 2.800 4.300-6"/></svg><svg style="left:174.500px;top:708.500px" width="15" height="15" viewBox="0 0 15 15" fill="none" stroke="#484644" stroke-width="1.200"><circle cx="6.500" cy="2.300" r="1.700"/><path d="M.8 5.200c3.500 1.500 8 1.500 11.500 0"/><path d="M4.500 6.300v3.200L2.300 14M8.500 6.300v3.200l1 2"/><path d="M9.800 9.800l4.400 4.400M14.200 9.800L9.800 14.200" stroke-width="1.300"/></svg><span class="t" style='left:193.00px;top:710.00px;font-size:12px;color:#484644;letter-spacing:-0.302px;'>Accessibility: Investigate</span><svg style="left:780px;top:709px" width="15" height="14" viewBox="0 0 15 14" fill="none" stroke="#484644" stroke-width="1"><path d="M.5 3V.5H3M11.500 .5H14V3M.5 11v2.500H3M14 11v2.500H11.500"/><path d="M4 1.800h4.300l2.700 2.700v7.200H4z"/><path d="M8.300 1.800v2.700H11"/></svg><span class="t" style='left:798.00px;top:710.00px;font-size:12px;color:#484644;letter-spacing:-0.922px;'>Focus</span><div class="a" style="left:852px;top:709px;width:5px;height:11px;border:1px solid #484644;border-right-width:0"></div><div class="a" style="left:858px;top:709px;width:6px;height:11px;border:1px solid #484644"></div><div class="a" style="left:879.500px;top:706px;width:39.500px;height:21px;background:#c8c6c4"></div><div class="a" style="left:893px;top:709px;width:9px;height:12px;border:1px solid #323130"></div><div class="a" style="left:932px;top:709px;width:10px;height:11px;border:1px solid #484644"></div><svg style="left:936.500px;top:714px" width="10" height="10" viewBox="0 0 10 10"><circle cx="5" cy="5" r="4.300" fill="#f3f2f1" stroke="#484644" stroke-width="1"/><ellipse cx="5" cy="5" rx="2" ry="4.300" fill="none" stroke="#484644" stroke-width=".8"/><path d="M.7 5h8.600" stroke="#484644" stroke-width=".8"/></svg><div class="a" style="left:965px;top:716.500px;width:8px;height:1.100px;background:#484644"></div><div class="a" style="left:978.500px;top:716.500px;width:99px;height:1px;background:#605e5c"></div><div class="a" style="left:1028.500px;top:713.500px;width:1px;height:7px;background:#605e5c"></div><div class="a" style="left:1032px;top:711px;width:6px;height:11.500px;background:#605e5c"></div><div class="a" style="left:1083px;top:716.500px;width:8.500px;height:1.100px;background:#484644"></div><div class="a" style="left:1086.700px;top:712.800px;width:1.100px;height:8.500px;background:#484644"></div><span class="t" style='left:1104.50px;top:710.00px;font-size:12px;color:#484644;letter-spacing:-1.234px;'>156%</span><svg style="left:0;top:700px" width="1151" height="28" viewBox="0 700 1151 28" shape-rendering="crispEdges"><rect x="854" y="712" width="3" height="1" fill="#484644"/><rect x="860" y="712" width="3" height="1" fill="#484644"/><rect x="854" y="714" width="3" height="1" fill="#484644"/><rect x="860" y="714" width="3" height="1" fill="#484644"/><rect x="854" y="716" width="3" height="1" fill="#484644"/><rect x="860" y="716" width="3" height="1" fill="#484644"/><rect x="854" y="718" width="3" height="1" fill="#484644"/><rect x="860" y="718" width="3" height="1" fill="#484644"/><rect x="896" y="712" width="5" height="1" fill="#323130"/><rect x="896" y="714" width="5" height="1" fill="#323130"/><rect x="896" y="716" width="5" height="1" fill="#323130"/><rect x="896" y="718" width="5" height="1" fill="#323130"/><rect x="896" y="720" width="5" height="1" fill="#323130"/><rect x="935" y="712" width="6" height="1" fill="#484644"/><rect x="935" y="714" width="6" height="1" fill="#484644"/><rect x="935" y="716" width="3" height="1" fill="#484644"/><rect x="935" y="718" width="3" height="1" fill="#484644"/></svg><div id="lb"></div><div id="rb"></div><div id="bb"></div>
</body>
</html>
